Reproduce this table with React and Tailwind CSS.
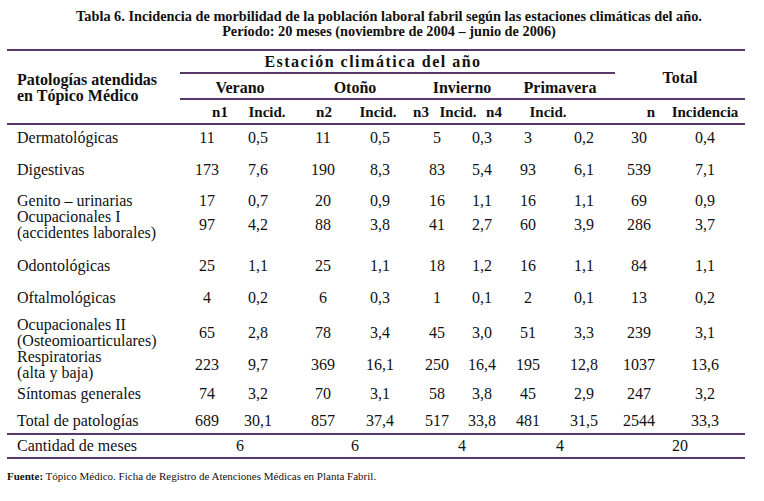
import React from "react";

const LINE = "h-[2px] bg-[#56396a]";

const dataCols = [
  "ml-[5px]",
  "ml-[7px]",
  "ml-[21px]",
  "ml-[13px]",
  "ml-[13px]",
  "ml-[1px]",
  "ml-[2px]",
  "ml-[12px]",
  "ml-[11px]",
  "ml-[22px]",
];

const rows = [
  { label: ["Dermatológicas"], h: "h-[29px]", lp: "pt-[5px]", np: "pt-[5px]", v: ["11", "0,5", "11", "0,5", "5", "0,3", "3", "0,2", "30", "0,4"] },
  { label: ["Digestivas"], h: "h-[32px]", lp: "pt-[8px]", np: "pt-[8px]", v: ["173", "7,6", "190", "8,3", "83", "5,4", "93", "6,1", "539", "7,1"] },
  { label: ["Genito – urinarias"], h: "h-[23px]", lp: "pt-[7px]", np: "pt-[7px]", v: ["17", "0,7", "20", "0,9", "16", "1,1", "16", "1,1", "69", "0,9"] },
  { label: ["Ocupacionales I", "(accidentes laborales)"], h: "h-[36px]", lp: "pt-[0px]", np: "pt-[8px]", v: ["97", "4,2", "88", "3,8", "41", "2,7", "60", "3,9", "286", "3,7"] },
  { label: ["Odontológicas"], h: "h-[37px]", lp: "pt-[13px]", np: "pt-[13px]", v: ["25", "1,1", "25", "1,1", "18", "1,2", "16", "1,1", "84", "1,1"] },
  { label: ["Oftalmológicas"], h: "h-[35px]", lp: "pt-[8px]", np: "pt-[8px]", v: ["4", "0,2", "6", "0,3", "1", "0,1", "2", "0,1", "13", "0,2"] },
  { label: ["Ocupacionales II", "(Osteomioarticulares)"], h: "h-[32px]", lp: "pt-[0px]", np: "pt-[8px]", v: ["65", "2,8", "78", "3,4", "45", "3,0", "51", "3,3", "239", "3,1"] },
  { label: ["Respiratorias", "(alta y baja)"], h: "h-[32px]", lp: "pt-[0px]", np: "pt-[8px]", v: ["223", "9,7", "369", "16,1", "250", "16,4", "195", "12,8", "1037", "13,6"] },
  { label: ["Síntomas generales"], h: "h-[27px]", lp: "pt-[5px]", np: "pt-[5px]", v: ["74", "3,2", "70", "3,1", "58", "3,8", "45", "2,9", "247", "3,2"] },
  { label: ["Total de patologías"], h: "h-[25px]", lp: "pt-[5px]", np: "pt-[5px]", v: ["689", "30,1", "857", "37,4", "517", "33,8", "481", "31,5", "2544", "33,3"] },
];

const head3 = [
  { t: "n1", c: "ml-[23px] w-[34px]" },
  { t: "Incid.", c: "ml-[13px] w-[34px]" },
  { t: "n2", c: "ml-[23px] w-[34px]" },
  { t: "Incid.", c: "ml-[20px] w-[34px]" },
  { t: "n3", c: "ml-[9px] w-[34px]" },
  { t: "Incid.", c: "ml-[3px] w-[34px]" },
  { t: "n4", c: "ml-[2px] w-[34px]" },
  { t: "Incid.", c: "ml-[20px] w-[34px]" },
  { t: "n", c: "ml-[69px] w-[34px]" },
  { t: "Incidencia", c: "ml-[0px] w-[74px]" },
];

const seasons = [
  { t: "Verano", c: "ml-[20px]" },
  { t: "Otoño", c: "ml-[35px]" },
  { t: "Invierno", c: "ml-[27px]" },
  { t: "Primavera", c: "ml-[18px]" },
];

const months = ["6", "6", "4", "4"];

export default function App() {
  return (
    <div className="w-[764px] h-[501px] bg-white text-[#111] font-['Liberation_Serif',serif] overflow-hidden">
      {/* Title */}
      <div className="pt-[9px] pl-[14px] text-center font-bold text-[14.3px] leading-[15px]">
        <div>Tabla 6. Incidencia de morbilidad de la población laboral fabril según las estaciones climáticas del año.</div>
        <div>Período: 20 meses (noviembre de 2004 – junio de 2006)</div>
      </div>

      <div className="ml-[7px] mt-[10px] w-[738px]">
        <div className={LINE} />

        {/* Header */}
        <div className="flex h-[72px]">
          <div className="w-[173px] pl-[10px] flex flex-col justify-center font-bold text-[16px] leading-[16px] pt-[2px] whitespace-nowrap">
            <div>Patologías atendidas</div>
            <div>en Tópico Médico</div>
          </div>
          <div className="flex-1 flex flex-col">
            <div className="flex h-[47px]">
              <div className="w-[435px] flex flex-col">
                <div className="h-[21px] flex items-center justify-center pr-[49px] font-bold text-[16px] leading-[16px] tracking-[1.5px] whitespace-nowrap">
                  Estación climática del año
                </div>
                <div className={LINE} />
                <div className="flex h-[24px] items-center font-bold text-[16px] leading-[16px] pt-[3px]">
                  {seasons.map((s, i) => (
                    <div key={i} className={`${s.c} w-[80px] flex justify-center whitespace-nowrap`}>
                      {s.t}
                    </div>
                  ))}
                </div>
              </div>
              <div className="flex-1 flex items-center justify-center font-bold text-[16px] leading-[16px] pt-[6px]">
                Total
              </div>
            </div>
            <div className={LINE} />
            <div className="flex flex-1 items-center font-bold text-[15px] leading-[16px] ml-[-173px] pl-[173px]">
              {head3.map((h, i) => (
                <div key={i} className={`${h.c} flex justify-center whitespace-nowrap`}>
                  {h.t}
                </div>
              ))}
            </div>
          </div>
        </div>

        <div className={LINE} />

        {/* Body */}
        {rows.map((r, i) => (
          <div key={i} className={`flex ${r.h} text-[16px] leading-[16px]`}>
            <div className={`w-[173px] pl-[10px] ${r.lp} whitespace-nowrap`}>
              {r.label.map((l, j) => (
                <div key={j}>{l}</div>
              ))}
            </div>
            {r.v.map((v, j) => (
              <div key={j} className={`${dataCols[j]} w-[44px] ${r.np} text-center`}>
                {v}
              </div>
            ))}
          </div>
        ))}

        <div className={LINE} />
        <div className="flex h-[22px] text-[16px] leading-[16px] items-center">
          <div className="w-[173px] pl-[10px]">Cantidad de meses</div>
          {months.map((m, i) => (
            <div key={i} className={`${seasons[i].c} w-[80px] text-center`}>
              {m}
            </div>
          ))}
          <div className="ml-[15px] w-[130px] text-center">20</div>
        </div>
        <div className={LINE} />
      </div>

      <div className="ml-[7px] mt-[10px] text-[11px] leading-[14px]">
        <span className="font-bold">Fuente:</span> Tópico Médico. Ficha de Registro de Atenciones Médicas en Planta Fabril.
      </div>
    </div>
  );
}
